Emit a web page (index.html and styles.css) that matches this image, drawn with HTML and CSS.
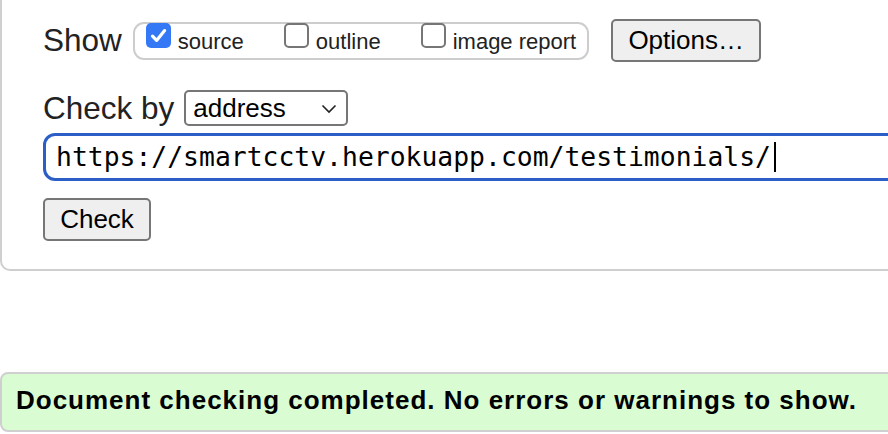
FILE: index.html
```html
<!DOCTYPE html>
<html>
<head>
<meta charset="utf-8">
<link rel="stylesheet" href="styles.css">
</head>
<body>
<div class="card">
  <div class="row row-show">
    <span class="lbl">Show</span>
    <div class="opts">
      <label class="opt"><span class="cb on"><svg width="25" height="25" viewBox="0 0 25 25"><path d="M6.5 13.2 L10.6 17.4 L18.6 7.6" fill="none" stroke="#fff" stroke-width="3.2" stroke-linecap="round" stroke-linejoin="round"/></svg></span><span class="otext">source</span></label>
      <label class="opt"><span class="cb"></span><span class="otext">outline</span></label>
      <label class="opt"><span class="cb"></span><span class="otext">image report</span></label>
    </div>
    <button class="btn btn-opts">Options…</button>
  </div>
  <div class="row row-by">
    <span class="lbl">Check by</span>
    <div class="select"><span>address</span><svg width="16" height="10" viewBox="0 0 16 10"><path d="M1.5 1.5 L8 8 L14.5 1.5" fill="none" stroke="#222" stroke-width="1.6"/></svg></div>
  </div>
  <div class="url"><span class="urltext">https://smartcctv.herokuapp.com/testimonials/</span><span class="caret"></span></div>
  <button class="btn btn-check">Check</button>
</div>
<div class="result">Document checking completed. No errors or warnings to show.</div>
</body>
</html>
```

FILE: styles.css
```css
html, body { margin: 0; padding: 0; background: #fff; overflow: hidden; }
body { font-family: "Liberation Sans", Arial, sans-serif; color: #222; width: 888px; height: 434px; }

.card {
  width: 960px;
  box-sizing: border-box;
  border: 2px solid #cfcfcf;
  border-top: none;
  border-radius: 0 0 0 10px;
  padding: 19px 0 0 41px;
  height: 271px;
}
.row { display: flex; align-items: center; }
.lbl { font-size: 31.5px; line-height: 36px; color: #222; }
.row-show { height: 42px; }
.opts {
  margin-left: 11px;
  height: 38px;
  box-sizing: border-box;
  border: 2px solid #cdcdcd;
  border-radius: 11px;
  display: flex;
  align-items: center;
  padding: 0 11px 0 11px;
  gap: 40px;
  margin-top: 2px;
}
.opt { display: flex; align-items: center; gap: 7px; }
.cb {
  width: 25px; height: 25px; box-sizing: border-box;
  border: 2px solid #767676; border-radius: 5px; background: #fff;
  display: block; margin-top: -12px;
}
.cb.on { background: #3478f6; border: none; }
.cb svg { display: block; }
.otext { font-size: 22px; line-height: 26px; color: #222; margin-top: 2px; }

.btn {
  font-family: "Liberation Sans", Arial, sans-serif;
  font-size: 26px;
  color: #000;
  background: #efefef;
  border: 2px solid #767676;
  border-radius: 5px;
  padding: 0;
  box-sizing: border-box;
}
.btn-opts { margin-left: 22px; width: 150px; height: 43px; }

.row-by { margin-top: 29px; height: 36px; }
.select {
  margin-left: 10px;
  width: 164px; height: 36px; box-sizing: border-box;
  border: 2px solid #767676; border-radius: 5px;
  display: flex; align-items: center; justify-content: space-between;
  padding: 0 9px 0 7px;
  font-size: 26px; color: #000;
}
.select svg { display: block; margin-top: 2px; }

.url {
  margin-top: 7px;
  width: 900px; height: 48px; box-sizing: border-box;
  border: 3px solid #2b5ec7; border-radius: 12px;
  display: flex; align-items: center;
  padding-left: 10px;
  font-family: "DejaVu Sans Mono", monospace; font-size: 26.4px; color: #000;
}
.urltext { line-height: 32px; }
.caret { display: inline-block; width: 2px; height: 30px; background: #000; margin-left: 3px; }

.btn-check { margin-top: 17px; width: 108px; height: 43px; display: block; }

.result {
  margin-top: 101px;
  width: 960px; height: 60px; box-sizing: border-box;
  border: 2px solid #cfcfcf; border-radius: 8px;
  background: #d9fcd3;
  font-weight: bold; font-size: 26px; letter-spacing: 1px; color: #000;
  padding-left: 14px; padding-bottom: 4px;
  display: flex; align-items: center;
}
```
